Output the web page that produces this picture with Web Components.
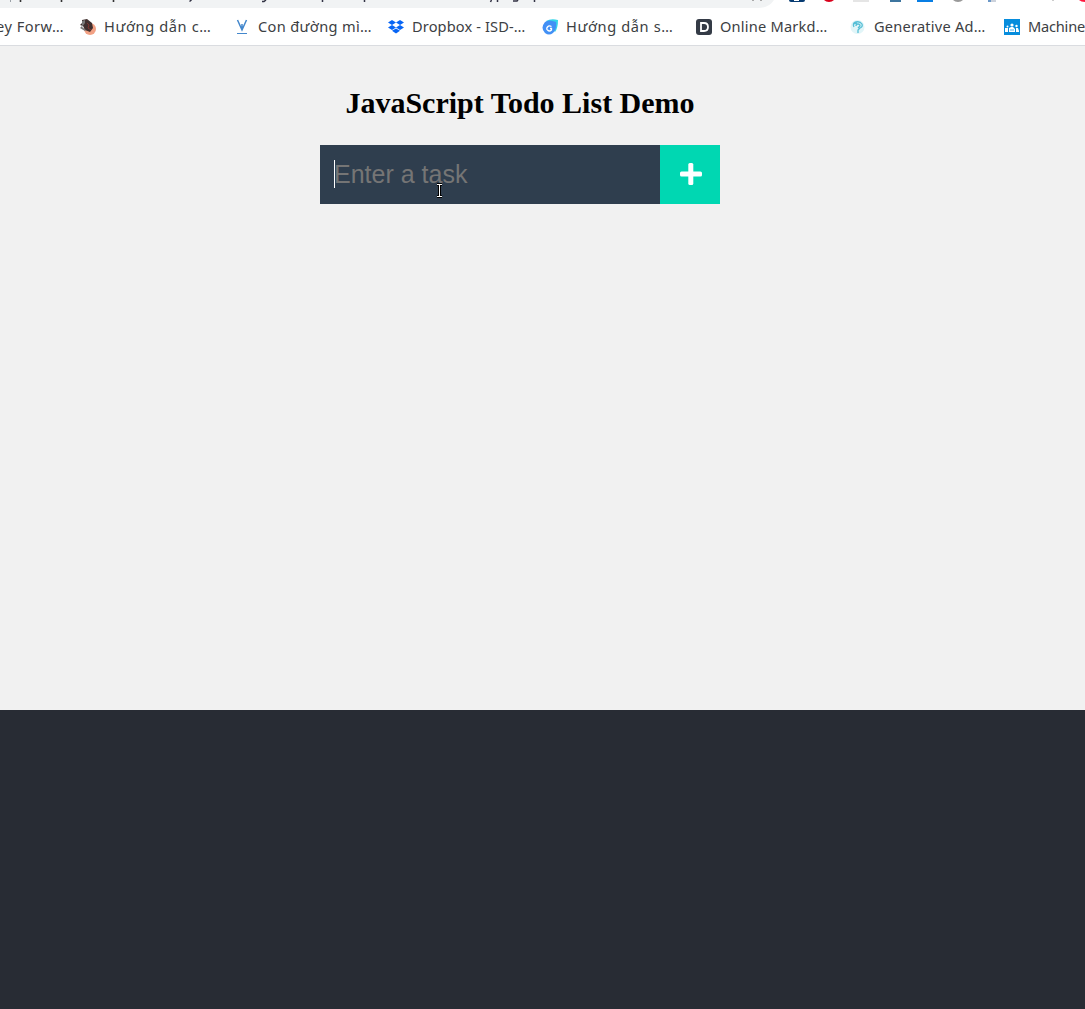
<!DOCTYPE html>
<html lang="vi">
<head>
<meta charset="utf-8">
<title>JavaScript Todo List Demo</title>
<style>
html,body{margin:0;height:100%;overflow:hidden}
body{background:#282c34}
</style>
</head>
<body>
<demo-window></demo-window>
<script>
class AddressStrip extends HTMLElement {
  constructor() {
    super();
    this.attachShadow({mode:'open'}).innerHTML = `
<style>:host{display:block;height:8px;background:#fff}svg{display:block}</style>
<svg width="1085" height="8" viewBox="0 0 1085 8">
<path d="M0 0H774Q769 8 758 8H0Z" fill="#f1f3f4"/>
<path d="M10.5 0v2" stroke="#9aa0a6"/>
<path d="M20.500 0v2M61.500 0v2M113.500 0v2" stroke="#333" stroke-width="1.600"/>
<path d="M191.500 0l-2 1.500M266 0l-2 1.500h-2M322.500 0v2M364.500 0v2M491.500 0l-1 2M497.500 0v2M513 1h4l1-1M534.500 0v2" fill="none" stroke="#334" stroke-width="1.500"/>
<path d="M752 .5h2M760 .5h2" stroke="#aaa"/>
<path d="M789 0h16q0 2-2 2h-12q-2 0-2-2" fill="#073b72"/><path d="M794 0h5v1h-5" fill="#fff"/>
<path d="M824 0h10q-2 2-5 2t-5-2" fill="#d9001b"/>
<path d="M853 0h16v2h-16" fill="#e5e5e5"/>
<path d="M890 0h11v2h-11" fill="#3d759f"/>
<path d="M917 0h16v2h-16" fill="#087ee4"/>
<path d="M953 0h10q-2 2-5 2t-5-2" fill="#999"/>
<path d="M988 0h3v2h-3" fill="#6b98c8"/><path d="M991 0h5v2h-5" fill="#ccd2dc"/>
<path d="M1052 0h2v1h-2" fill="#ccc"/>
<path d="M1079 0h6v2q-4 0-6-2" fill="#ff173d"/>
</svg>`;
  }
}
customElements.define('address-strip', AddressStrip);

class BookmarkItem extends HTMLElement {
  constructor() {
    super();
    this.attachShadow({mode:'open'}).innerHTML = `
<style>
:host{display:flex;flex:none;align-items:center;gap:8px;height:24px;width:var(--pitch,154px);font:14.6px/22px "Noto Sans","Open Sans",sans-serif;color:#3c4043}
.icon{flex:none;width:16px;height:16px}
::slotted(svg){display:block;width:16px;height:16px}
.label{white-space:nowrap;padding-bottom:2px}
</style><div class="icon"><slot name="icon"></slot></div><span class="label"></span>`;
  }
  connectedCallback() {
    const label = this.shadowRoot.querySelector('.label');
    label.textContent = this.getAttribute('label');
    const natural = label.getBoundingClientRect().width;
    const count = [...label.textContent].length;
    label.style.letterSpacing = (Number(this.getAttribute('extent')) - natural) / count + 'px';
  }
}
customElements.define('bookmark-item', BookmarkItem);

class BookmarkBar extends HTMLElement {
  constructor() {
    super();
    this.attachShadow({mode:'open'}).innerHTML = `
<style>
:host{display:flex;box-sizing:border-box;height:38px;padding:7px 0 0;background:#fff;border-bottom:1px solid #dadce0;overflow:hidden}
bookmark-item:first-of-type{margin-left:-28px;--pitch:108px}
</style>
<bookmark-item label="ey Forw…" extent="68"></bookmark-item>
<bookmark-item label="Hướng dẫn c…" extent="107.500"><svg slot="icon" viewBox="0 0 16 16"><circle cx="10" cy="10" r="6" fill="#f2a184"/><path d="M2 1l5-1 5 4 1 5-3 4-5-2-2-4-3-1 2-2z" fill="#40302f"/><path d="M2 2l3-1v3L2 8l4 3-1 1-5-3 2-2z" fill="#777"/><path d="M7 4l2 2-1 3 3 2" stroke="#80362f" fill="none"/></svg></bookmark-item>
<bookmark-item label="Con đường mì…" extent="114"><svg slot="icon" viewBox="0 0 16 16"><path d="M3.500 1L8 11l4.500-10M8 5v6" fill="none" stroke="#4387cc" stroke-width="1.500"/><path d="M3 14.500h10" stroke="#4387cc"/></svg></bookmark-item>
<bookmark-item label="Dropbox - ISD-…" extent="113.500"><svg slot="icon" viewBox="0 0 16 16" fill="#0765f5"><path d="M4 1l4 2.500L4 6 0 3.500zM12 1l4 2.500L12 6 8 3.500zM4 6l4 2.500L4 11 0 8.500zM12 6l4 2.500L12 11 8 8.500zM8 9.500l4 2.300L8 14.500l-4-2.700z"/></svg></bookmark-item>
<bookmark-item label="Hướng dẫn s…" extent="107.500"><svg slot="icon" viewBox="0 0 16 16"><path d="M4 2Q9-1 16 1q0 8-3 12Z" fill="#35d5e8"/><path d="M3 3Q7 0 14 3q1 7-3 11-4 3-8 0-5-5 0-11" fill="#4290f5"/><path d="M9.500 7.500Q7 6 5.500 8t0 3q2 2 4 0V9.500H8" fill="none" stroke="#fff" stroke-width="1.300"/></svg></bookmark-item>
<bookmark-item label="Online Markd…" extent="107.500"><svg slot="icon" viewBox="0 0 16 16"><rect width="16" height="16" rx="3" fill="#343b46"/><path d="M5 4h3q4 0 4 4t-4 4H5z" fill="none" stroke="#fff" stroke-width="1.800"/></svg></bookmark-item>
<bookmark-item label="Generative Ad…" extent="111.500"><svg slot="icon" viewBox="0 0 16 16"><circle cx="7.500" cy="8" r="7" fill="#e1f5f8"/><path d="M4 8Q2 4 6 3q4-1 6 2 1 3-2 4l-2 2v3M6 7q0-2 2-2t2 2L8 9M4 5l3-1" fill="none" stroke="#55bed6" stroke-width="1.300"/></svg></bookmark-item>
<bookmark-item label="Machine" extent="57"><svg slot="icon" viewBox="0 0 16 16"><path d="M0 0h16v16H0" fill="#078ddd"/><g fill="#fff"><circle cx="8" cy="6" r="1.600"/><circle cx="3.500" cy="7.500" r="1"/><circle cx="12.500" cy="7" r="1.200"/><path d="M5 13V9l2-1h2l2 2v3zM1 13V9h3v4zM12 9h2l1 3v1h-3z"/></g><path d="M7 10v2M9 10v2" stroke="#078ddd" stroke-width=".7"/></svg></bookmark-item>`;
  }
}
customElements.define('bookmark-bar', BookmarkBar);

class TodoForm extends HTMLElement {
  constructor() {
    super();
    this.attachShadow({mode:'open'}).innerHTML = `
<style>
:host{display:flex;width:400px;height:59px}
.field{position:relative;box-sizing:border-box;width:340px;padding:0 14px;background:#2f3e4e;color:#757575;font:25px/59px "Liberation Sans",Arial,sans-serif}
.caret{position:absolute;left:14px;top:15px;width:1px;height:28px;background:#fff}
.pointer{position:absolute;left:115px;top:37px}
button{display:flex;align-items:center;justify-content:center;width:60px;border:0;padding:0 0 1px 2px;background:#00d7b2}
svg{display:block}
</style>
<div class="field">Enter a task<i class="caret"></i><svg class="pointer" width="9" height="17" viewBox="0 0 9 17"><path d="M2 2.500h2l.5.5.5-.5h2M4.500 3v11M2 14.500h2l.5-.5.5.5h2" fill="none" stroke="#000" stroke-width="3"/><path d="M2 2.500h5M4.500 3v11M2 14.500h5" fill="none" stroke="#fff"/></svg></div>
<button aria-label="Add"><svg width="22" height="22" viewBox="0 0 22 22" fill="#fff"><rect x="0" y="8.500" width="22" height="5" rx="1.500"/><rect x="8.300" y="0" width="5" height="22" rx="1.500"/></svg></button>`;
  }
}
customElements.define('todo-form', TodoForm);

class DemoWindow extends HTMLElement {
  constructor() {
    super();
    this.attachShadow({mode:'open'}).innerHTML = `
<style>
:host{display:flex;flex-direction:column;height:1009px;width:1085px;background:#282c34}
main{display:flex;flex-direction:column;align-items:center;box-sizing:border-box;height:664px;padding:40px 45px 0 0;background:#f1f1f1}
h1{margin:0 0 25px;font:bold 30px/34px "Liberation Serif","Times New Roman",serif;color:#000;white-space:nowrap}
</style>
<address-strip></address-strip><bookmark-bar></bookmark-bar>
<main><h1>JavaScript Todo List Demo</h1><todo-form></todo-form></main>`;
  }
}
customElements.define('demo-window', DemoWindow);
</script>
</body>
</html>
